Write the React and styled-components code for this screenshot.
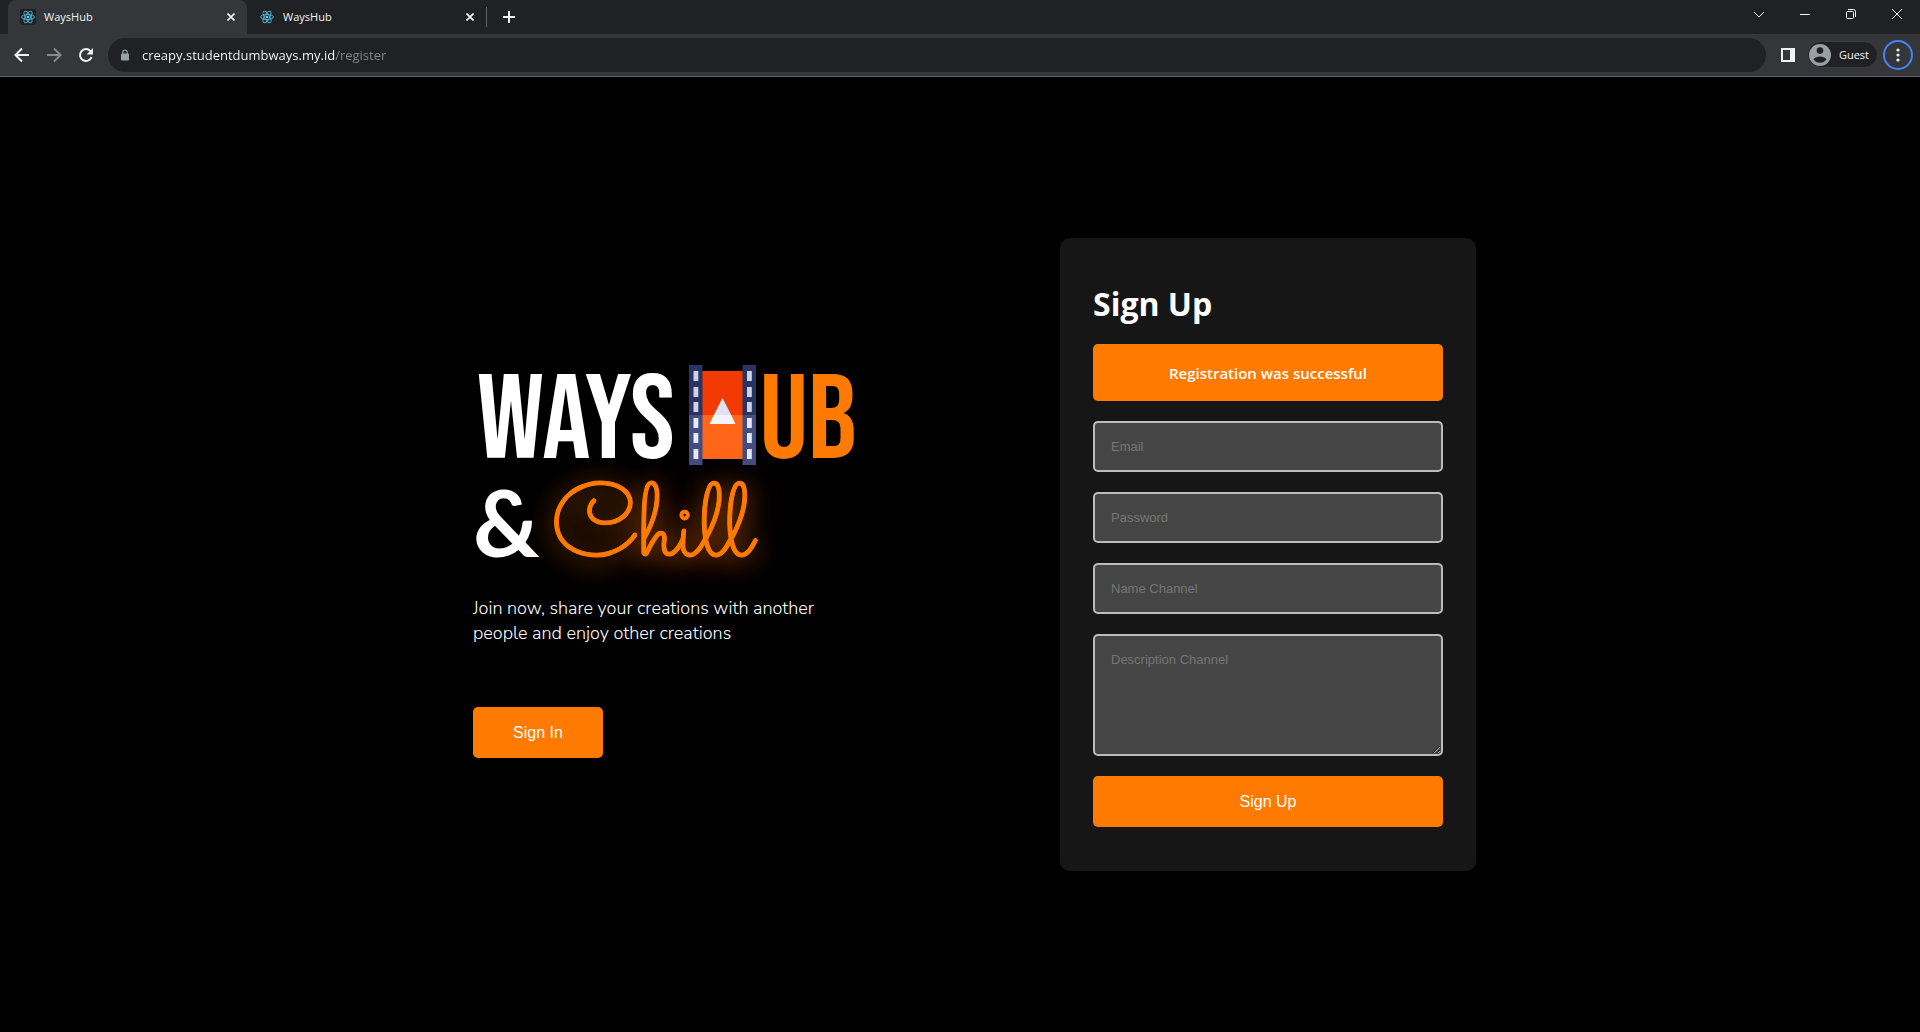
import React from "react";
import styled, { createGlobalStyle } from "styled-components";

const ORANGE = "#ff7a00";
const UI = `"Open Sans", "Noto Sans", sans-serif`;
const ARIAL = `"Liberation Sans", Arial, sans-serif`;

const GlobalStyle = createGlobalStyle`
  *, *::before, *::after { box-sizing: border-box; }
  html, body, #root { height: 100%; }
  body { margin: 0; background: #000; color: #fff; font-family: ${UI}; }
  button, input, textarea { font: inherit; color: inherit; }
  svg { display: block; }
`;

const Window = styled.div`
  display: flex;
  flex-direction: column;
  min-height: 100%;
`;

/* Browser frame */

const TabStrip = styled.header`
  display: flex;
  height: 34px;
  padding-left: 8px;
  background: #202124;
`;

const Tabs = styled.nav`
  display: flex;
  flex: 1;
  align-items: center;
`;

const Tab = styled.div`
  display: flex;
  align-items: center;
  width: 239px;
  height: 34px;
  padding: 0 8px 0 12px;
  gap: 8px;
  border-radius: 8px 8px 0 0;
  background: ${(p) => (p.$active ? "#35363a" : "transparent")};
`;

const Favicon = styled.span`
  display: grid;
  place-items: center;
  width: 16px;
  height: 16px;
  border-radius: 2px;
  background: #202124;
`;

const TabTitle = styled.span`
  flex: 1;
  font-size: 11px;
  line-height: 16px;
  color: #f1f3f4;
`;

const IconButton = styled.button`
  display: grid;
  place-items: center;
  width: ${(p) => p.$size}px;
  height: ${(p) => p.$size}px;
  padding: 0;
  border: 0;
  border-radius: 50%;
  background: transparent;
  color: ${(p) => (p.$dim ? "#87888b" : "#f1f3f4")};
`;

const TabDivider = styled.span`
  width: 1px;
  height: 20px;
  margin-right: 8px;
  background: #5f6368;
`;

const WindowButton = styled.button`
  display: grid;
  place-items: center;
  width: 46px;
  height: 28px;
  padding: 0;
  border: 0;
  background: transparent;
  color: #f1f3f4;
`;

const Toolbar = styled.div`
  display: flex;
  align-items: center;
  height: 43px;
  padding: 0 7px 1px 6px;
  background: #35363a;
  border-bottom: 1px solid #5f6368;
`;

const NavButtons = styled.div`
  display: flex;
  margin-right: 6px;
`;

const AddressBar = styled.label`
  display: flex;
  flex: 1;
  align-items: center;
  height: 34px;
  margin-right: 7px;
  padding: 0 16px 0 12px;
  gap: 12px;
  border-radius: 17px;
  background: #202124;
  color: #9aa0a6;
`;

const AddressInput = styled.input`
  flex: 1;
  min-width: 0;
  padding: 0;
  border: 0;
  outline: 0;
  font-size: 13px;
  line-height: 20px;
  color: transparent;
  caret-color: #fff;
  background: linear-gradient(90deg, #fff 193px, #85888c 193px);
  background-clip: text;
  -webkit-background-clip: text;
`;

const Profile = styled.button`
  display: flex;
  align-items: center;
  height: 27px;
  margin: 0 5px 0 4px;
  padding: 0 8px 0 1px;
  gap: 8px;
  border: 1px solid #3c3d41;
  border-radius: 14px;
  background: #202124;
  color: #f1f3f4;
  font-size: 11px;
`;

const MenuButton = styled(IconButton)`
  border: 2px solid #4285f4;
`;

/* Page */

const Page = styled.main`
  display: flex;
  flex: 1;
  align-items: center;
  justify-content: center;
  padding: 24px 0 24px 29px;
  gap: 204px;
`;

const Intro = styled.section`
  display: flex;
  flex-direction: column;
  align-items: flex-start;
  width: 383px;
  padding-top: 14px;
`;

const Logo = styled.h1`
  margin: 0;
  font-weight: 400;
`;

const LogoRow = styled.span`
  display: flex;
  align-items: center;
  height: ${(p) => p.$height}px;
  padding-left: ${(p) => p.$inset}px;
  gap: ${(p) => p.$gap}px;
`;

const Block = styled.span`
  padding: ${(p) => (p.$accent ? "14px 0 0" : "14px 10px 0 0")};
  font-family: "Bebas Neue", "Liberation Sans Narrow", "DejaVu Sans Condensed", sans-serif;
  font-size: 120px;
  line-height: 100px;
  color: ${(p) => (p.$accent ? ORANGE : "#fff")};
`;

const Ampersand = styled.span`
  font-family: Lato, sans-serif;
  font-weight: 700;
  font-size: 92px;
  line-height: 100px;
`;

const Neon = styled.span`
  padding-top: 24px;
  font-family: Sacramento, "Dancing Script", Lato, sans-serif;
  font-weight: 400;
  font-size: 104px;
  line-height: 108px;
  color: ${ORANGE};
  -webkit-text-stroke: 1px ${ORANGE};
  text-shadow: 0 4px 24px rgba(255, 122, 0, 0.6), 0 4px 36px rgba(255, 122, 0, 0.5);
`;

const Lead = styled.p`
  margin: 17px 0 61px;
  font-family: "Nunito Sans", Nunito, Lato, sans-serif;
  font-weight: 300;
  font-size: 18px;
  line-height: 25px;
`;

const Button = styled.button`
  width: ${(p) => (p.$wide ? "100%" : "130px")};
  height: 51px;
  padding: 0;
  border: 0;
  border-radius: 5px;
  background: ${ORANGE};
  color: #fff;
  font-family: ${ARIAL};
  font-size: 16px;
`;

const Card = styled.form`
  display: flex;
  flex-direction: column;
  width: 416px;
  padding: 46px 33px 44px;
  gap: 20px;
  border-radius: 10px;
  background: #161616;
`;

const CardTitle = styled.h2`
  margin: 0;
  font-size: 32px;
  font-weight: 700;
  line-height: 40px;
`;

const Notice = styled.p`
  margin: 0;
  padding: 17px 16px 15px;
  border-radius: 5px;
  background: ${ORANGE};
  font-size: 15px;
  font-weight: 600;
  line-height: 25px;
  text-align: center;
`;

const Field = styled.input`
  width: 100%;
  height: ${(p) => (p.as === "textarea" ? 122 : 51)}px;
  padding: 16px;
  border: 2px solid #bcbcbc;
  border-radius: 5px;
  outline: 0;
  display: block;
  background: #454545;
  font-family: ${ARIAL};
  font-size: 13px;
  line-height: 15px;
  &::placeholder { color: #757575; }
`;

const ReactMark = () => (
  <svg width="14" height="14" viewBox="0 0 24 24" fill="none" stroke="#4fb4cf" strokeWidth="1.6" aria-hidden="true">
    <ellipse cx="12" cy="12" rx="11" ry="4.4" />
    <ellipse cx="12" cy="12" rx="11" ry="4.4" transform="rotate(60 12 12)" />
    <ellipse cx="12" cy="12" rx="11" ry="4.4" transform="rotate(120 12 12)" />
    <circle cx="12" cy="12" r="2.2" fill="#61dafb" stroke="none" />
  </svg>
);

const Stroke = ({ d, size = 16, width = 2 }) => (
  <svg width={size} height={size} viewBox={`0 0 ${size} ${size}`} fill="none" stroke="currentColor" strokeWidth={width} aria-hidden="true">
    <path d={d} />
  </svg>
);

const Reload = () => (
  <svg width="16" height="16" viewBox="0 0 16 16" fill="none" aria-hidden="true">
    <path d="M13.6 10.2a6 6 0 1 1-1.2-6.3L14 5.6" stroke="currentColor" strokeWidth="2" />
    <path d="M15 1v6.4H8.6z" fill="currentColor" />
  </svg>
);

const Lock = () => (
  <svg width="10" height="12" viewBox="0 0 10 12" aria-hidden="true">
    <rect x="1" y="4.5" width="8" height="7" rx="1" fill="currentColor" />
    <path d="M2.8 5V3.2a2.2 2.2 0 0 1 4.4 0V5" fill="none" stroke="currentColor" strokeWidth="1.2" />
  </svg>
);

const Avatar = () => (
  <svg width="22" height="22" viewBox="0 0 22 22" aria-hidden="true">
    <circle cx="11" cy="11" r="11" fill="#9aa0a6" />
    <circle cx="11" cy="6.6" r="3.3" fill="#202124" />
    <path d="M4.4 15.2c1.3-2 4.300-2.800 6.600-2.800s5.300.8 6.600 2.800c-1.500 2.300-4 3.600-6.600 3.600s-5.100-1.300-6.600-3.600z" fill="#202124" />
  </svg>
);

const holes = [6, 22, 37, 53, 68, 84];

const FilmStrip = () => (
  <svg width="67" height="100" viewBox="0 0 67 100" aria-hidden="true">
    <path d="M13 6h41v44H13z" fill="#f23a02" />
    <path d="M13 50h41v44H13z" fill="#ff661a" />
    {[0, 53.5].map((x) => (
      <g key={x}>
        <rect x={x} width="13.500" height="50" fill="#293462" />
        <rect x={x} y="50" width="13.500" height="50" fill="#454c80" />
        {holes.map((y) => (
          <rect key={y} x={x + 4.5} y={y} width="4.800" height="10" fill={y < 50 ? "#cdd3e4" : "#e4ebf8"} />
        ))}
      </g>
    ))}
    <path d="M33.500 33l8.700 17H24.800z" fill="#dde3f1" />
    <path d="M24.800 50h17.400l4.300 9H20.500z" fill="#f0f5ff" />
  </svg>
);

const BrowserTab = ({ active }) => (
  <Tab $active={active}>
    <Favicon><ReactMark /></Favicon>
    <TabTitle>WaysHub</TabTitle>
    <IconButton $size={16} aria-label="Close tab">
      <Stroke size={8} d="M0.500 0.500l7 7M7.500 0.500l-7 7" width={1.7} />
    </IconButton>
  </Tab>
);

export default function App() {
  return (
    <Window>
      <GlobalStyle />
      <TabStrip>
        <Tabs aria-label="Tabs">
          <BrowserTab active />
          <BrowserTab />
          <TabDivider />
          <IconButton $size={28} aria-label="New tab">
            <Stroke size={12} d="M6 0v12M0 6h12" />
          </IconButton>
        </Tabs>
        <WindowButton aria-label="Search tabs">
          <Stroke size={12} width={1} d="M1 4l5 5 5-5" />
        </WindowButton>
        <WindowButton aria-label="Minimize">
          <Stroke size={10} width={1} d="M0 5.500h10" />
        </WindowButton>
        <WindowButton aria-label="Restore">
          <Stroke size={10} width={1} d="M2 .5h5.500a2 2 0 0 1 2 2V8M1.500 2.500h5a1 1 0 0 1 1 1v5a1 1 0 0 1-1 1h-5a1 1 0 0 1-1-1v-5a1 1 0 0 1 1-1z" />
        </WindowButton>
        <WindowButton aria-label="Close">
          <Stroke size={10} width={1} d="M0 0l10 10M10 0L0 10" />
        </WindowButton>
      </TabStrip>
      <Toolbar>
        <NavButtons>
          <IconButton $size={32} aria-label="Back">
            <Stroke d="M15 8H2M8 1.500L1.500 8 8 14.500" />
          </IconButton>
          <IconButton $size={32} $dim aria-label="Forward">
            <Stroke d="M1 8h13M8 1.500L14.500 8 8 14.500" />
          </IconButton>
          <IconButton $size={32} aria-label="Reload">
            <Reload />
          </IconButton>
        </NavButtons>
        <AddressBar>
          <Lock />
          <AddressInput aria-label="Address" defaultValue="creapy.studentdumbways.my.id/register" />
        </AddressBar>
        <IconButton $size={30} aria-label="Side panel">
          <svg width="14" height="14" viewBox="0 0 14 14" aria-hidden="true">
            <path fillRule="evenodd" d="M0 0h14v14H0zM2 2v10h7V2z" fill="currentColor" />
          </svg>
        </IconButton>
        <Profile>
          <Avatar />
          Guest
        </Profile>
        <MenuButton $size={30} aria-label="Menu">
          <svg width="4" height="14" viewBox="0 0 4 14" fill="currentColor" aria-hidden="true">
            <circle cx="2" cy="2" r="1.600" />
            <circle cx="2" cy="7" r="1.600" />
            <circle cx="2" cy="12" r="1.600" />
          </svg>
        </MenuButton>
      </Toolbar>
      <Page>
        <Intro>
          <Logo>
            <LogoRow $height={100} $inset={4} $gap={4}>
              <Block>WAYS</Block>
              <FilmStrip />
              <Block $accent>UB</Block>
            </LogoRow>
            <LogoRow $height={114} $inset={0} $gap={12}>
              <Ampersand>&amp;</Ampersand>
              <Neon>Chill</Neon>
            </LogoRow>
          </Logo>
          <Lead>Join now, share your creations with another people and enjoy other creations</Lead>
          <Button type="button">Sign In</Button>
        </Intro>
        <Card onSubmit={(e) => e.preventDefault()}>
          <CardTitle>Sign Up</CardTitle>
          <Notice role="status">Registration was successful</Notice>
          <Field type="email" placeholder="Email" aria-label="Email" />
          <Field type="password" placeholder="Password" aria-label="Password" />
          <Field type="text" placeholder="Name Channel" aria-label="Name Channel" />
          <Field as="textarea" placeholder="Description Channel" aria-label="Description Channel" />
          <Button type="submit" $wide>Sign Up</Button>
        </Card>
      </Page>
    </Window>
  );
}
